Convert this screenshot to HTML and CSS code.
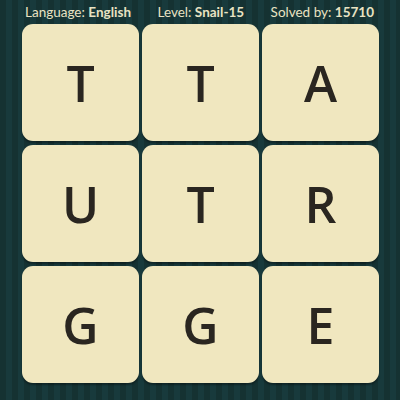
FILE: index.html
```
<!DOCTYPE html>
<html>
<head>
<meta charset="utf-8">
<link rel="stylesheet" href="styles.css">
</head>
<body>
<div class="page">
  <div class="header">
    <span class="item">Language: <b>English</b></span>
    <span class="item">Level: <b>Snail-15</b></span>
    <span class="item">Solved by: <b>15710</b></span>
  </div>
  <div class="grid">
    <div class="tile">T</div>
    <div class="tile">T</div>
    <div class="tile">A</div>
    <div class="tile">U</div>
    <div class="tile">T</div>
    <div class="tile">R</div>
    <div class="tile">G</div>
    <div class="tile">G</div>
    <div class="tile">E</div>
  </div>
</div>
</body>
</html>
```
FILE: styles.css
```
html, body {
  margin: 0;
  padding: 0;
}
body {
  width: 400px;
  height: 400px;
  overflow: hidden;
  background-color: #163436;
  background-image: repeating-linear-gradient(90deg, #153232 0px, #153232 6px, #183a3c 6px, #183a3c 12px);
  font-family: Lato, "Open Sans", sans-serif;
}
.page {
  display: flex;
  flex-direction: column;
}
.header {
  height: 25px;
  display: flex;
  justify-content: space-between;
  align-items: center;
  padding: 0 26px 1px 25px;
  color: #e9e3c3;
  font-size: 13.5px;
  box-sizing: border-box;
}
.header b {
  font-weight: 700;
}
.grid {
  margin-top: -1px;
  margin-left: 22px;
  display: grid;
  grid-template-columns: repeat(3, 117px);
  grid-template-rows: repeat(3, 117px);
  column-gap: 3px;
  row-gap: 4px;
}
.tile {
  background: #f0e7bf;
  border-radius: 11px;
  box-shadow: 0 2px 2px rgba(0, 0, 0, 0.35);
  display: flex;
  align-items: center;
  justify-content: center;
  color: #2a2620;
  font-family: "Open Sans", sans-serif;
  font-weight: 600;
  font-size: 50px;
  line-height: 1;
}
```
